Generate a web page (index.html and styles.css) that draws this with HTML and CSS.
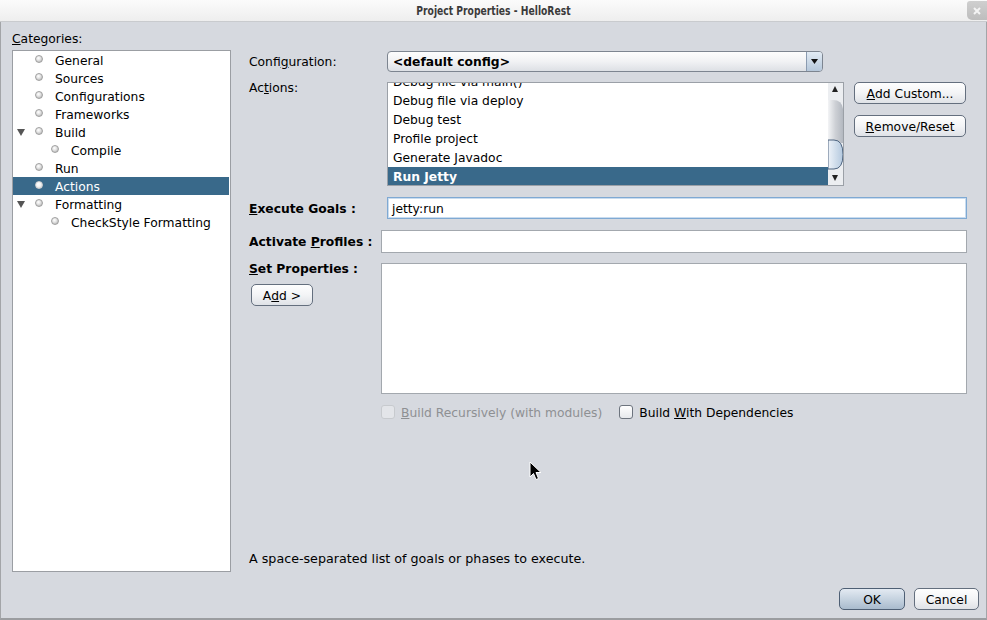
FILE: index.html
```html
<!DOCTYPE html>
<html>
<head>
<meta charset="utf-8">
<link rel="stylesheet" href="styles.css">
</head>
<body>
<div class="window">
  <div class="titlebar">
    <span class="title">Project Properties - HelloRest</span>
    <span class="close"><svg width="8" height="8" viewBox="0 0 8 8"><path d="M1 1L7 7M7 1L1 7" stroke="#f4f4f4" stroke-width="2"/></svg></span>
  </div>
  <div class="body">
    <div class="left">
      <div class="cat-label"><u>C</u>ategories:</div>
      <div class="tree">
        <div class="node"><span class="tw"></span><span class="bullet"></span><span class="txt">General</span></div>
        <div class="node"><span class="tw"></span><span class="bullet"></span><span class="txt">Sources</span></div>
        <div class="node"><span class="tw"></span><span class="bullet"></span><span class="txt">Configurations</span></div>
        <div class="node"><span class="tw"></span><span class="bullet"></span><span class="txt">Frameworks</span></div>
        <div class="node"><span class="tw"><svg width="8" height="7" viewBox="0 0 8 7"><path d="M0 0H8L4 7Z" fill="#555"/></svg></span><span class="bullet"></span><span class="txt">Build</span></div>
        <div class="node child"><span class="tw"></span><span class="bullet"></span><span class="txt">Compile</span></div>
        <div class="node"><span class="tw"></span><span class="bullet"></span><span class="txt">Run</span></div>
        <div class="node selected"><span class="tw"></span><span class="bullet"></span><span class="txt">Actions</span></div>
        <div class="node"><span class="tw"><svg width="8" height="7" viewBox="0 0 8 7"><path d="M0 0H8L4 7Z" fill="#555"/></svg></span><span class="bullet"></span><span class="txt">Formatting</span></div>
        <div class="node child"><span class="tw"></span><span class="bullet"></span><span class="txt">CheckStyle Formatting</span></div>
      </div>
    </div>
    <div class="right">
      <div class="row row-config">
        <div class="label lbl-wide">Confi<u>g</u>uration:</div>
        <div class="combo">
          <span class="combo-text">&lt;default config&gt;</span>
          <span class="combo-arrow"><svg width="7" height="5" viewBox="0 0 7 5"><path d="M0 0H7L3.5 5Z" fill="#111"/></svg></span>
        </div>
      </div>
      <div class="row row-actions">
        <div class="label lbl-wide lbl-top">Ac<u>t</u>ions:</div>
        <div class="listbox">
          <div class="list-view">
            <div class="list-items">
              <div class="item">Debug file via main()</div>
              <div class="item">Debug file via deploy</div>
              <div class="item">Debug test</div>
              <div class="item">Profile project</div>
              <div class="item">Generate Javadoc</div>
              <div class="item selected">Run Jetty</div>
            </div>
          </div>
          <div class="scrollbar">
            <svg width="15" height="102" viewBox="0 0 15 102">
              <defs>
                <linearGradient id="trk" x1="0" y1="0" x2="1" y2="0">
                  <stop offset="0" stop-color="#f3f4f6"/>
                  <stop offset="0.5" stop-color="#cdd0d5"/>
                  <stop offset="1" stop-color="#b3b8c0"/>
                </linearGradient>
                <linearGradient id="thm" x1="0" y1="0" x2="1" y2="0">
                  <stop offset="0" stop-color="#eef3f9"/>
                  <stop offset="1" stop-color="#b3c8de"/>
                </linearGradient>
              </defs>
              <rect x="0" y="0" width="15" height="102" fill="#eceef1"/>
              <path d="M4 9H10L7 3Z" fill="#222"/>
              <path d="M0 17H5Q14 17 15 26V60H0Z" fill="url(#trk)"/>
              <path d="M0 57H6Q15 57 15 71.5Q15 86 6 86H0Z" fill="url(#thm)" stroke="#4f6580" stroke-width="1"/>
              <path d="M4 92H10L7 98Z" fill="#222"/>
            </svg>
          </div>
        </div>
        <div class="side-buttons">
          <div class="btn"><u>A</u>dd Custom...</div>
          <div class="btn"><u>R</u>emove/Reset</div>
        </div>
      </div>
      <div class="row row-exec">
        <div class="label lbl-wide bold lbl-shift"><u>E</u>xecute Goals :</div>
        <div class="field focused">jetty:run</div>
      </div>
      <div class="row row-prof">
        <div class="label lbl-narrow bold">Activate <u>P</u>rofiles :</div>
        <div class="field tall"></div>
      </div>
      <div class="row row-props">
        <div class="props-left">
          <div class="label bold lbl-top"><u>S</u>et Properties :</div>
          <div class="btn btn-add">A<u>d</u>d &gt;</div>
        </div>
        <div class="field area"></div>
      </div>
      <div class="row row-checks">
        <label class="check disabled"><span class="box"></span><span><u>B</u>uild Recursively (with modules)</span></label>
        <label class="check"><span class="box"></span><span>Build <u>W</u>ith Dependencies</span></label>
      </div>
      <div class="desc">A space-separated list of goals or phases to execute.</div>
    </div>
  </div>
  <div class="footer">
    <div class="btn btn-ok">OK</div>
    <div class="btn btn-cancel">Cancel</div>
  </div>
  <svg class="cursor" width="13" height="20" viewBox="0 0 13 20">
    <path d="M1 1V16L4.5 12.5L7 18.5L9.5 17.5L7 11.5H12Z" fill="#000" stroke="#fff" stroke-width="1"/>
  </svg>
</div>
</body>
</html>
```

FILE: styles.css
```css
* { box-sizing: border-box; }
html, body { margin: 0; padding: 0; }
body {
  width: 987px;
  height: 620px;
  overflow: hidden;
  font-family: "DejaVu Sans", "Liberation Sans", sans-serif;
  font-size: 12.3px;
  color: #000;
  background: #d6d9df;
}
u { text-decoration: underline; text-underline-offset: 1px; }

.window {
  position: relative;
  width: 987px;
  height: 620px;
  display: flex;
  flex-direction: column;
  background: #d6d9df;
  border-left: 1px solid #a3a5a8;
  border-right: 1px solid #a3a5a8;
  border-bottom: 2px solid #9b9da0;
}

.titlebar {
  height: 22px;
  flex: none;
  display: flex;
  align-items: center;
  justify-content: center;
  background: linear-gradient(#fbfbfb, #eeeeee);
  border-bottom: 1px solid #c9cbce;
  margin-left: -1px;
  margin-right: -1px;
  position: relative;
}
.title {
  display: inline-block;
  font-family: "DejaVu Sans", sans-serif;
  font-weight: bold;
  font-size: 11.5px;
  color: #3a3a3a;
  transform: scaleX(0.8);
  white-space: nowrap;
}
.close {
  position: absolute;
  right: 0;
  top: 1px;
  width: 20px;
  height: 19px;
  background: linear-gradient(#cfcfcf, #bdbdbd);
  border-radius: 3px 0 0 5px;
  display: flex;
  align-items: center;
  justify-content: center;
}

.body {
  flex: none;
  height: 550px;
  display: flex;
  padding: 8px 19px 0 11px;
  gap: 18px;
}

.left {
  width: 219px;
  flex: none;
  display: flex;
  flex-direction: column;
}
.cat-label {
  height: 16px;
  line-height: 18px;
  margin-bottom: 4px;
}
.tree {
  height: 522px;
  background: #fff;
  border: 1px solid #9b9ea3;
}
.node {
  height: 18px;
  display: flex;
  align-items: center;
  padding-left: 4px;
  padding-top: 2px;
  margin-right: 1px;
  white-space: nowrap;
}
.node.child { padding-left: 20px; }
.tw {
  width: 8px;
  height: 7px;
  display: flex;
  flex: none;
  position: relative;
  top: -1px;
}
.bullet {
  width: 8px;
  height: 8px;
  margin-left: 10px;
  margin-right: 12px;
  border-radius: 50%;
  flex: none;
  background: radial-gradient(circle at 40% 35%, #ffffff 0, #e8e8e8 35%, #a9a9a9 100%);
  border: 1px solid #a0a0a0;
  position: relative;
  top: -2px;
}
.node.selected {
  background: #39698a;
  color: #fff;
}
.node.selected .bullet {
  background: radial-gradient(circle at 40% 35%, #ffffff 0, #f4f4f4 45%, #c9c9c9 100%);
  border-color: #d0d0d0;
}

.right {
  flex: 1;
  display: flex;
  flex-direction: column;
}
.row { display: flex; flex: none; }
.label { flex: none; white-space: nowrap; }
.lbl-wide { width: 138px; }
.lbl-narrow { width: 132px; }
.lbl-shift { padding-top: 2px; }
.bold { font-weight: bold; }

.row-config {
  margin-top: 21px;
  height: 21px;
  align-items: center;
}
.combo {
  width: 436px;
  height: 21px;
  border: 1px solid #7d8590;
  border-radius: 4px;
  background: linear-gradient(#fdfdfd, #f1f2f4 50%, #dde0e5);
  display: flex;
  align-items: center;
  overflow: hidden;
}
.combo-text {
  flex: 1;
  padding-left: 5px;
  font-weight: bold;
}
.combo-arrow {
  width: 16px;
  height: 100%;
  flex: none;
  border-left: 1px solid #8a9bb0;
  background: linear-gradient(#e2ebf4, #b5c7da);
  display: flex;
  align-items: center;
  justify-content: center;
}

.row-actions {
  margin-top: 10px;
  height: 104px;
}
.lbl-top { line-height: 13px; }
.listbox {
  width: 457px;
  height: 104px;
  border: 1px solid #9ba0a7;
  background: #fff;
  display: flex;
}
.list-view {
  flex: 1;
  overflow: hidden;
}
.list-items { margin-top: -11px; }
.item {
  height: 19px;
  line-height: 19px;
  padding-left: 5px;
  padding-top: 1px;
  white-space: nowrap;
}
.item.selected {
  background: #39698a;
  color: #fff;
  font-weight: bold;
}
.scrollbar {
  width: 15px;
  flex: none;
  display: flex;
}
.side-buttons {
  margin-left: 10px;
  width: 112px;
  display: flex;
  flex-direction: column;
  gap: 11px;
}

.btn {
  height: 22px;
  border: 1px solid #646f7e;
  border-radius: 5px;
  background: linear-gradient(#fefefe, #f3f4f6 50%, #dfe2e7);
  display: flex;
  align-items: center;
  justify-content: center;
  padding-top: 2px;
  white-space: nowrap;
}

.row-exec {
  margin-top: 11px;
  height: 22px;
  align-items: center;
}
.field {
  flex: 1;
  height: 22px;
  background: #fff;
  border: 1px solid #a3a8ae;
  display: flex;
  align-items: center;
  padding-left: 4px;
  padding-top: 2px;
}
.field.focused {
  border: 1px solid #7fa9d3;
  box-shadow: inset 0 0 0 1px #c9dcef;
}
.row-prof {
  margin-top: 11px;
  height: 23px;
  align-items: center;
}
.field.tall { height: 23px; }

.row-props {
  margin-top: 10px;
  height: 131px;
}
.props-left {
  width: 132px;
  flex: none;
  display: flex;
  flex-direction: column;
  align-items: flex-start;
}
.btn-add {
  margin-top: 8px;
  margin-left: 2px;
  width: 62px;
}
.field.area { height: 131px; }

.row-checks {
  margin-top: 10px;
  height: 16px;
  padding-left: 132px;
  align-items: center;
  gap: 17px;
}
.check {
  display: flex;
  align-items: center;
  gap: 6px;
  padding-top: 2px;
  white-space: nowrap;
}
.box {
  width: 14px;
  height: 14px;
  border: 1px solid #6d747e;
  border-radius: 3px;
  background: linear-gradient(#ffffff, #e7e9ec);
  flex: none;
  position: relative;
  top: -1px;
}
.check.disabled { color: #8e9093; }
.check.disabled .box {
  border-color: #c7cace;
  background: #e3e5e9;
}

.desc {
  margin-top: auto;
  margin-bottom: 5px;
  height: 16px;
  line-height: 16px;
  font-size: 12.7px;
}

.footer {
  flex: 1;
  display: flex;
  justify-content: flex-end;
  align-items: flex-start;
  padding-top: 16px;
  padding-right: 7px;
  gap: 9px;
}
.btn-ok {
  width: 66px;
  border-color: #4e5f74;
  background: linear-gradient(#e3eaf2, #c6d3e0 50%, #a9bbcd);
}
.btn-cancel { width: 65px; }

.cursor {
  position: absolute;
  left: 528px;
  top: 461px;
}
```
